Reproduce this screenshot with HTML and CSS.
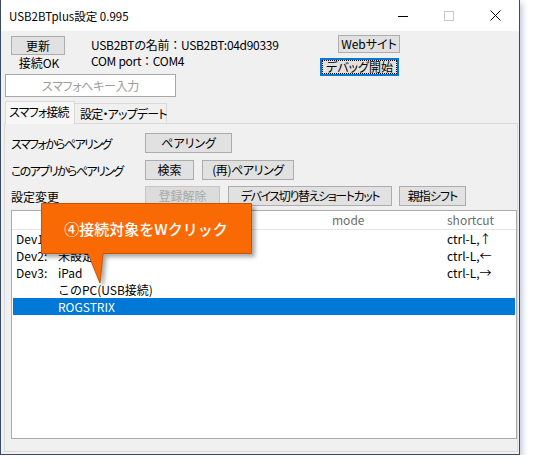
FILE: index.html
```html
<!DOCTYPE html>
<html lang="ja">
<head>
<meta charset="utf-8">
<title>USB2BTplus設定</title>
<link rel="stylesheet" href="styles.css">
</head>
<body>
<div class="window">
  <div class="titlebar">
    <span class="title">USB2BTplus設定 0.995</span>
    <div class="caption">
      <span class="cap"><svg width="10" height="10" viewBox="0 0 10 10"><line x1="0" y1="5.5" x2="10" y2="5.5" stroke="#000" stroke-width="1"/></svg></span>
      <span class="cap"><svg width="10" height="10" viewBox="0 0 10 10"><rect x="0.5" y="0.5" width="9" height="9" fill="none" stroke="#c6c6c6" stroke-width="1"/></svg></span>
      <span class="cap"><svg width="11" height="11" viewBox="0 0 11 11"><path d="M0.5 0.5L10.5 10.5M10.5 0.5L0.5 10.5" stroke="#000" stroke-width="1"/></svg></span>
    </div>
  </div>
  <div class="client">
    <div class="top">
      <div class="conn">
        <button class="btn btn-update">更新</button>
        <span class="status">接続OK</span>
      </div>
      <div class="info">
        <div>USB2BTの名前：USB2BT:04d90339</div>
        <div>COM port：COM4</div>
      </div>
      <div class="links">
        <button class="btn btn-web">Webサイト</button>
        <button class="btn btn-debug">デバッグ開始</button>
      </div>
    </div>
    <div class="keyinput">スマフォへキー入力</div>
    <div class="tabs">
      <div class="tab active">スマフォ接続</div>
      <div class="tab">設定・アップデート</div>
    </div>
    <div class="panel">
      <div class="row row1">
        <span class="label narrow">スマフォからペアリング</span>
        <button class="btn w-pair">ペアリング</button>
      </div>
      <div class="row row2">
        <span class="label narrow">このアプリからペアリング</span>
        <button class="btn w-search">検索</button>
        <button class="btn w-repair">(再)ペアリング</button>
      </div>
      <div class="row row3">
        <span class="label">設定変更</span>
        <button class="btn w-unreg" disabled>登録解除</button>
        <button class="btn w-shortcut">デバイス切り替えショートカット</button>
        <button class="btn w-thumb">親指シフト</button>
      </div>
      <div class="list">
        <div class="list-head"><span></span><span></span><span>mode</span><span>shortcut</span></div>
        <div class="item"><span>Dev1:</span><span></span><span></span><span>ctrl-L,↑</span></div>
        <div class="item"><span>Dev2:</span><span>未設定</span><span></span><span>ctrl-L,←</span></div>
        <div class="item"><span>Dev3:</span><span>iPad</span><span></span><span>ctrl-L,→</span></div>
        <div class="item"><span></span><span>このPC(USB接続)</span><span></span><span></span></div>
        <div class="item selected"><span></span><span>ROGSTRIX</span><span></span><span></span></div>
      </div>
    </div>
  </div>
  <svg class="callout-shape" width="222" height="92" viewBox="0 0 222 92">
    <path d="M3.5 3.5H213.5V53.5H65L62 83L50 53.5H3.5Z" fill="#f96a05" stroke="#c85504" stroke-width="1"/>
  </svg>
  <div class="callout-text">④接続対象をWクリック</div>
</div>
</body>
</html>
```

FILE: styles.css
```css
* { box-sizing: border-box; }

body {
  margin: 0;
  background: #ffffff;
  font-family: "Noto Sans CJK JP", "Noto Sans", sans-serif;
  font-size: 12px;
  color: #000;
}

.window {
  position: relative;
  width: 520px;
  height: 455px;
  border: 1px solid #3b4961;
  border-top: none;
  box-shadow: 2px 3px 6px rgba(70, 80, 140, 0.35);
  display: flex;
  flex-direction: column;
  background: #f0f0f0;
  white-space: nowrap;
}

.titlebar {
  height: 31px;
  background: #ffffff;
  display: flex;
  align-items: center;
  padding-left: 8px;
}

.title {
  font-size: 11.5px;
  line-height: 16px;
  font-feature-settings: "palt";
}

.caption {
  margin-left: auto;
  display: flex;
  height: 31px;
  margin-right: 1px;
}

.cap {
  width: 46px;
  height: 31px;
  display: flex;
  align-items: center;
  justify-content: center;
}

.client {
  flex: 1;
  display: flex;
  flex-direction: column;
  background: #f0f0f0;
  font-feature-settings: "palt";
}

.btn {
  font-family: "Noto Sans CJK JP", "Noto Sans", sans-serif;
  font-size: 12px;
  font-feature-settings: "palt";
  line-height: 16px;
  color: #000;
  background: #e1e1e1;
  border: 1px solid #adadad;
  padding: 0;
  margin: 0;
  height: 20px;
  display: flex;
  align-items: center;
  justify-content: center;
  white-space: nowrap;
}

.btn[disabled] {
  color: #a8a8a8;
  background: #dcdcdc;
  border-color: #c6c6c6;
}

.top {
  display: flex;
  height: 43px;
  padding: 4px 0 0 10px;
}

.conn {
  width: 54px;
  display: flex;
  flex-direction: column;
  align-items: center;
}

.btn-update {
  width: 54px;
  height: 19px;
  margin-top: 1px;
}

.status {
  line-height: 16px;
  margin-left: 2px;
}

.info {
  margin-left: 26px;
  padding-top: 2px;
  line-height: 16px;
  font-feature-settings: normal;
  letter-spacing: -0.3px;
}

.links {
  margin-left: auto;
  margin-right: 119px;
  display: flex;
  flex-direction: column;
  align-items: flex-end;
  gap: 5px;
}

.btn-web {
  width: 62px;
  height: 19px;
}

.btn-debug {
  width: 79px;
  height: 19px;
  border: 1px solid #0078d7;
  box-shadow: inset 0 0 0 1px #0078d7;
  outline: 1px dotted #000;
  outline-offset: -3px;
  margin-right: 1px;
}

.keyinput {
  margin-left: 4px;
  width: 171px;
  height: 23px;
  background: #fff;
  border: 1px solid #a7a7a7;
  color: #9d9d9d;
  display: flex;
  align-items: center;
  justify-content: center;
  line-height: 16px;
  letter-spacing: -0.3px;
}

.tabs {
  display: flex;
  align-items: flex-end;
  margin-top: 3px;
  margin-left: 4px;
  height: 23px;
  position: relative;
  z-index: 1;
  letter-spacing: -0.8px;
}

.tab {
  height: 19px;
  border: 1px solid #d9d9d9;
  border-bottom: none;
  background: #f0f0f0;
  line-height: 16px;
  display: flex;
  align-items: center;
  margin-bottom: 1px;
}

.tab.active {
  height: 23px;
  margin-bottom: -1px;
  background: #f7f7f7;
  width: 70px;
  padding: 0 0 2px 3px;
}

.tab:not(.active) {
  width: 92px;
  border-left: none;
  padding: 1px 0 0 5px;
}

.panel {
  flex: 1;
  margin: 0 1px 2px 3px;
  border: 1px solid #dadada;
  padding: 9px 0 0 6px;
  display: flex;
  flex-direction: column;
}

.row {
  display: flex;
  align-items: center;
  height: 20px;
}

.row2 { margin-top: 7px; }
.row3 { margin-top: 6px; }

.label {
  width: 134px;
  line-height: 16px;
  padding-top: 1px;
}

.label.narrow {
  letter-spacing: -1.6px;
}

.w-pair { width: 87px; }
.w-search { width: 49px; }
.w-repair { width: 92px; margin-left: 8px; letter-spacing: -0.4px; }
.w-unreg { width: 75px; }
.w-shortcut { width: 164px; margin-left: 8px; letter-spacing: -1.4px; }
.w-thumb { width: 67px; margin-left: 7px; letter-spacing: -1px; }

.list {
  margin-top: 4px;
  width: 506px;
  height: 229px;
  background: #fff;
  border: 1px solid #ababab;
  font-feature-settings: normal;
}

.list-head,
.item {
  display: grid;
  grid-template-columns: 42px 274px 115px 1fr;
  padding-left: 4px;
  align-items: center;
}

.list-head {
  height: 19px;
  border-bottom: 1px solid #e5e5e5;
  color: #6d6d6d;
  line-height: 16px;
}

.item {
  height: 17px;
  line-height: 16px;
  margin: 0 1px 0 0;
}

.item.selected {
  background: #0078d7;
  color: #fff;
  margin: 0 1px;
  padding-left: 3px;
}

.callout-shape {
  position: absolute;
  left: 37px;
  top: 200px;
  filter: drop-shadow(3px 3px 2px rgba(0, 0, 0, 0.35));
}

.callout-text {
  position: absolute;
  left: 40px;
  top: 203px;
  width: 210px;
  height: 50px;
  display: flex;
  align-items: center;
  justify-content: center;
  color: #fff;
  font-size: 15px;
  font-weight: 500;
  line-height: 20px;
  padding-top: 1px;
}
```
